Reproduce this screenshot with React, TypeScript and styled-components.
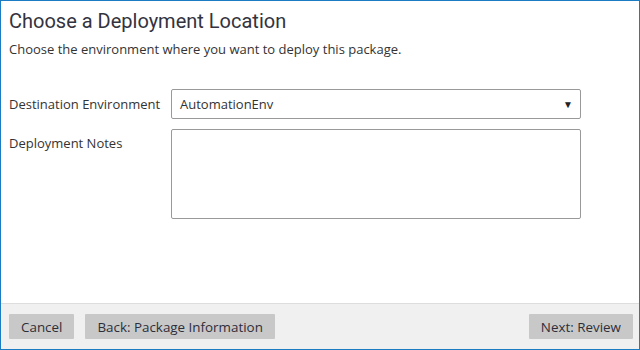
import * as React from 'react'
import styled, { createGlobalStyle } from 'styled-components'

const GlobalStyle = createGlobalStyle`
	html, body {
		margin: 0;
		padding: 0;
		background: #ffffff;
	}
	* {
		box-sizing: border-box;
	}
`

const Dialog = styled.div`
	width: 640px;
	height: 350px;
	border: 1px solid #1b7cc4;
	display: flex;
	flex-direction: column;
	background: #ffffff;
	font-family: 'Open Sans', sans-serif;
	color: #333333;
`

const Body = styled.div`
	flex: 1;
	padding: 8px 8px 0 8px;
`

const Title = styled.h1`
	margin: 0;
	font-family: Roboto, sans-serif;
	font-weight: 400;
	font-size: 20px;
	line-height: 24px;
	color: #333340;
`

const Subtitle = styled.p`
	margin: 7px 0 0 0;
	font-size: 13px;
	line-height: 18px;
`

const Form = styled.div`
	margin-top: 31px;
	display: grid;
	grid-template-columns: 162px 410px;
	row-gap: 10px;
`

const Label = styled.label<{ $top?: boolean }>`
	font-size: 13px;
	line-height: 18px;
	align-self: ${(p) => (p.$top ? 'start' : 'center')};
	padding-top: ${(p) => (p.$top ? '5px' : '0')};
`

const Select = styled.div`
	height: 30px;
	border: 1px solid #999999;
	border-radius: 2px;
	display: flex;
	align-items: center;
	justify-content: space-between;
	padding: 0 7px 0 8px;
	font-size: 13px;
`

const Arrow = styled.span`
	font-size: 10px;
	color: #222222;
`

const Notes = styled.div`
	height: 90px;
	border: 1px solid #999999;
	border-radius: 2px;
`

const Footer = styled.div`
	height: 46px;
	background: #f0f0f0;
	border-top: 1px solid #dddddd;
	display: flex;
	align-items: center;
	padding: 0 6px 0 8px;
	gap: 11px;
`

const Button = styled.button<{ $right?: boolean }>`
	height: 25px;
	border: none;
	border-radius: 1px;
	background: #c8c8c8;
	color: #2e2e3a;
	font-family: 'Open Sans', sans-serif;
	font-size: 13.4px;
	padding: 0 12px;
	margin-left: ${(p) => (p.$right ? 'auto' : '0')};
`

const App: React.FC = () => (
	<>
		<GlobalStyle />
		<Dialog>
			<Body>
				<Title>Choose a Deployment Location</Title>
				<Subtitle>Choose the environment where you want to deploy this package.</Subtitle>
				<Form>
					<Label>Destination Environment</Label>
					<Select>
						AutomationEnv
						<Arrow>▼</Arrow>
					</Select>
					<Label $top>Deployment Notes</Label>
					<Notes />
				</Form>
			</Body>
			<Footer>
				<Button>Cancel</Button>
				<Button>Back: Package Information</Button>
				<Button $right>Next: Review</Button>
			</Footer>
		</Dialog>
	</>
)

export default App
